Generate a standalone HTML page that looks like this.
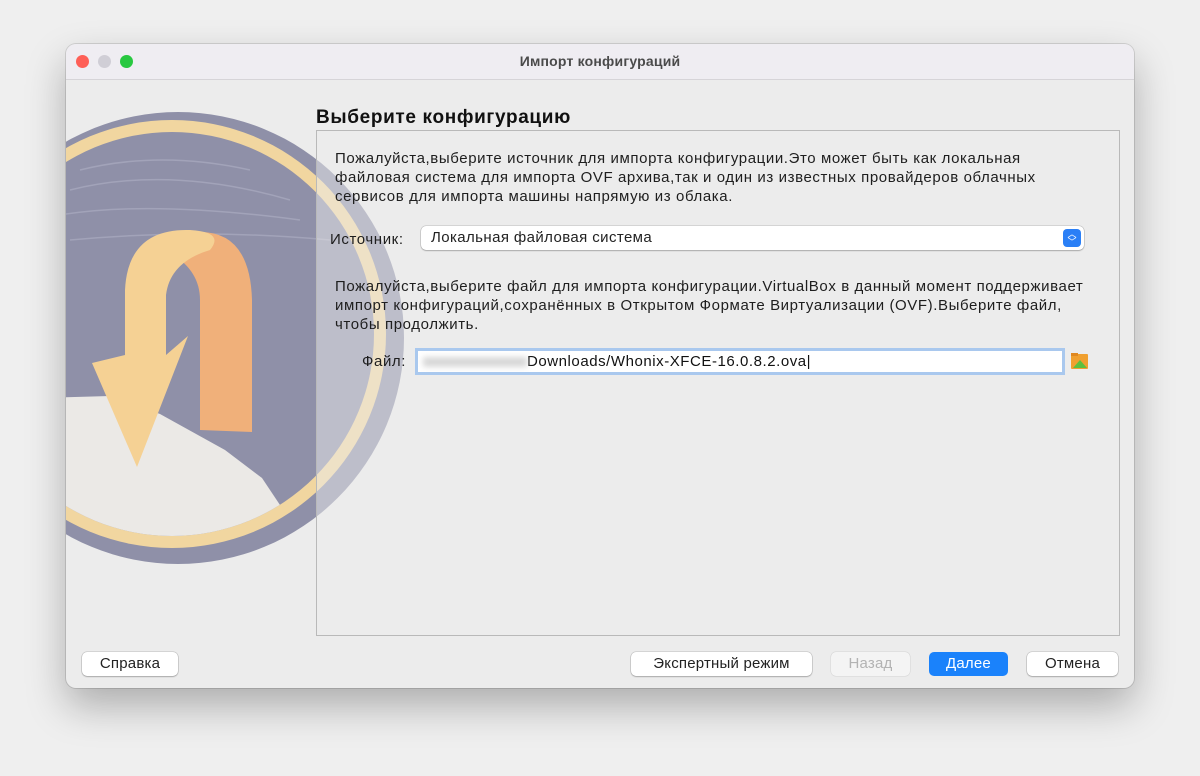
<!DOCTYPE html>
<html><head><meta charset="utf-8"><style>
*{margin:0;padding:0;box-sizing:border-box}
body{width:1200px;height:776px;background:#efefef;font-family:"Liberation Sans","DejaVu Sans",sans-serif;position:relative;overflow:hidden}
.win{position:absolute;left:66px;top:44px;width:1068px;height:644px;background:#ececec;border-radius:10px;box-shadow:0 18px 40px rgba(0,0,0,.28),0 0 0 1px rgba(0,0,0,.12);overflow:hidden}
.tb{position:absolute;left:0;top:0;width:100%;height:36px;background:#efedf2;border-bottom:1px solid #d6d4d8}
.tb .t{position:absolute;left:0;width:100%;top:9px;text-align:center;font-size:14px;font-weight:bold;color:#4a4a4a;letter-spacing:.2px}
.dot{position:absolute;top:11px;width:13px;height:13px;border-radius:50%}
.abs{position:absolute}
.txt{font-size:15px;letter-spacing:.6px;color:#1e1e1e;line-height:19px;white-space:nowrap}
.btn{position:absolute;top:608px;height:24px;background:#fff;border-radius:5px;box-shadow:0 0 0 .5px rgba(0,0,0,.2),0 1px 1.5px rgba(0,0,0,.2);font-size:15px;letter-spacing:.2px;text-align:center;line-height:24px;color:#222}
</style></head><body>
<div class="win">
<svg class="abs" style="left:0;top:0" width="1068" height="644" viewBox="66 44 1068 644">
<circle cx="178" cy="338" r="226" fill="#8f90a8"/>
<circle cx="172" cy="334" r="214" fill="#f1d6a0"/>
<circle cx="172" cy="334" r="202" fill="#8f90a8"/>
<clipPath id="c"><circle cx="172" cy="334" r="202"/></clipPath>
<path clip-path="url(#c)" d="M40 398 L110 396 L160 414 L225 450 L262 478 L290 520 L300 600 L40 600Z" fill="#ebe9e6"/>
<g fill="none" stroke="#a2a3b9" stroke-width="1.5" clip-path="url(#c)">
<path d="M80 170 Q160 150 250 170"/><path d="M70 190 Q170 165 290 200"/><path d="M60 215 Q150 200 300 220"/><path d="M70 240 Q200 228 330 240"/>
</g>
<path d="M200 430 L252 432 L252 300 Q250 232 200 232 L165 250 Q200 268 200 300Z" fill="#f0b07a"/>
<path d="M125 355 L125 290 Q128 228 190 230 Q225 232 210 250 Q170 262 166 295 L166 355 L188 336 L137 467 L92 363Z" fill="#f5d194"/>
<rect x="316" y="44" width="830" height="640" fill="rgba(236,236,236,0.5)"/>
</svg>
<div class="tb"><div class="dot" style="left:10px;background:#fe5f57"></div><div class="dot" style="left:32px;background:#d0ced6"></div><div class="dot" style="left:54px;background:#28c840"></div><div class="t">Импорт конфигураций</div></div>
<div class="abs" style="left:250px;top:63px;font-size:19px;letter-spacing:.65px;font-weight:bold;color:#111">Выберите конфигурацию</div>
<div class="abs" style="left:250px;top:86px;width:804px;height:506px;border:1px solid #b9b9b9"></div>
<div class="abs txt" style="left:269px;top:105px">Пожалуйста,выберите источник для импорта конфигурации.Это может быть как локальная<br>файловая система для импорта OVF архива,так и один из известных провайдеров облачных<br>сервисов для импорта машины напрямую из облака.</div>
<div class="abs txt" style="left:264px;top:186px">Источник:</div>
<div class="abs" style="left:355px;top:182px;width:663px;height:24px;background:#fff;border-radius:5px;box-shadow:0 0 0 .5px rgba(0,0,0,.2),0 1px 1.5px rgba(0,0,0,.2);font-size:15px;letter-spacing:.4px;line-height:24px;padding-left:10px;color:#222">Локальная файловая система
<div class="abs" style="right:3px;top:3px;width:18px;height:18px;background:#2a7ff6;border-radius:4px;color:#fff;font-size:9px;line-height:8px;text-align:center;padding-top:1px;letter-spacing:0">︿<br>﹀</div></div>
<div class="abs txt" style="left:269px;top:233px">Пожалуйста,выберите файл для импорта конфигурации.VirtualBox в данный момент поддерживает<br>импорт конфигураций,сохранённых в Открытом Формате Виртуализации (OVF).Выберите файл,<br>чтобы продолжить.</div>
<div class="abs txt" style="left:296px;top:308px">Файл:</div>
<div class="abs" style="left:349px;top:304px;width:650px;height:27px;background:#fff;border:3px solid #a9c8ee;font-size:15px;letter-spacing:.55px;line-height:21px;padding-left:5px;color:#111;white-space:nowrap"><span style="display:inline-block;width:104px;height:10px;background:#d8d8d8;filter:blur(3px);vertical-align:middle"></span>Downloads/Whonix-XFCE-16.0.8.2.ova|</div>
<svg class="abs" style="left:1004px;top:307px" width="20" height="20"><rect x="1" y="3" width="17" height="15" rx="1" fill="#f0a030"/><rect x="1" y="2" width="7" height="3" fill="#e08820"/><path d="M3 17 L10 9 L17 17Z" fill="#5cc040"/></svg>
<div class="btn" style="left:16px;width:96px">Справка</div>
<div class="btn" style="left:565px;width:181px">Экспертный режим</div>
<div class="btn" style="left:765px;width:79px;background:#f4f4f4;color:#b3b3b3;box-shadow:0 0 0 .5px rgba(0,0,0,.1)">Назад</div>
<div class="btn" style="left:863px;width:79px;background:#1a82fb;color:#fff;box-shadow:none">Далее</div>
<div class="btn" style="left:961px;width:91px">Отмена</div>
</div>
</body></html>
